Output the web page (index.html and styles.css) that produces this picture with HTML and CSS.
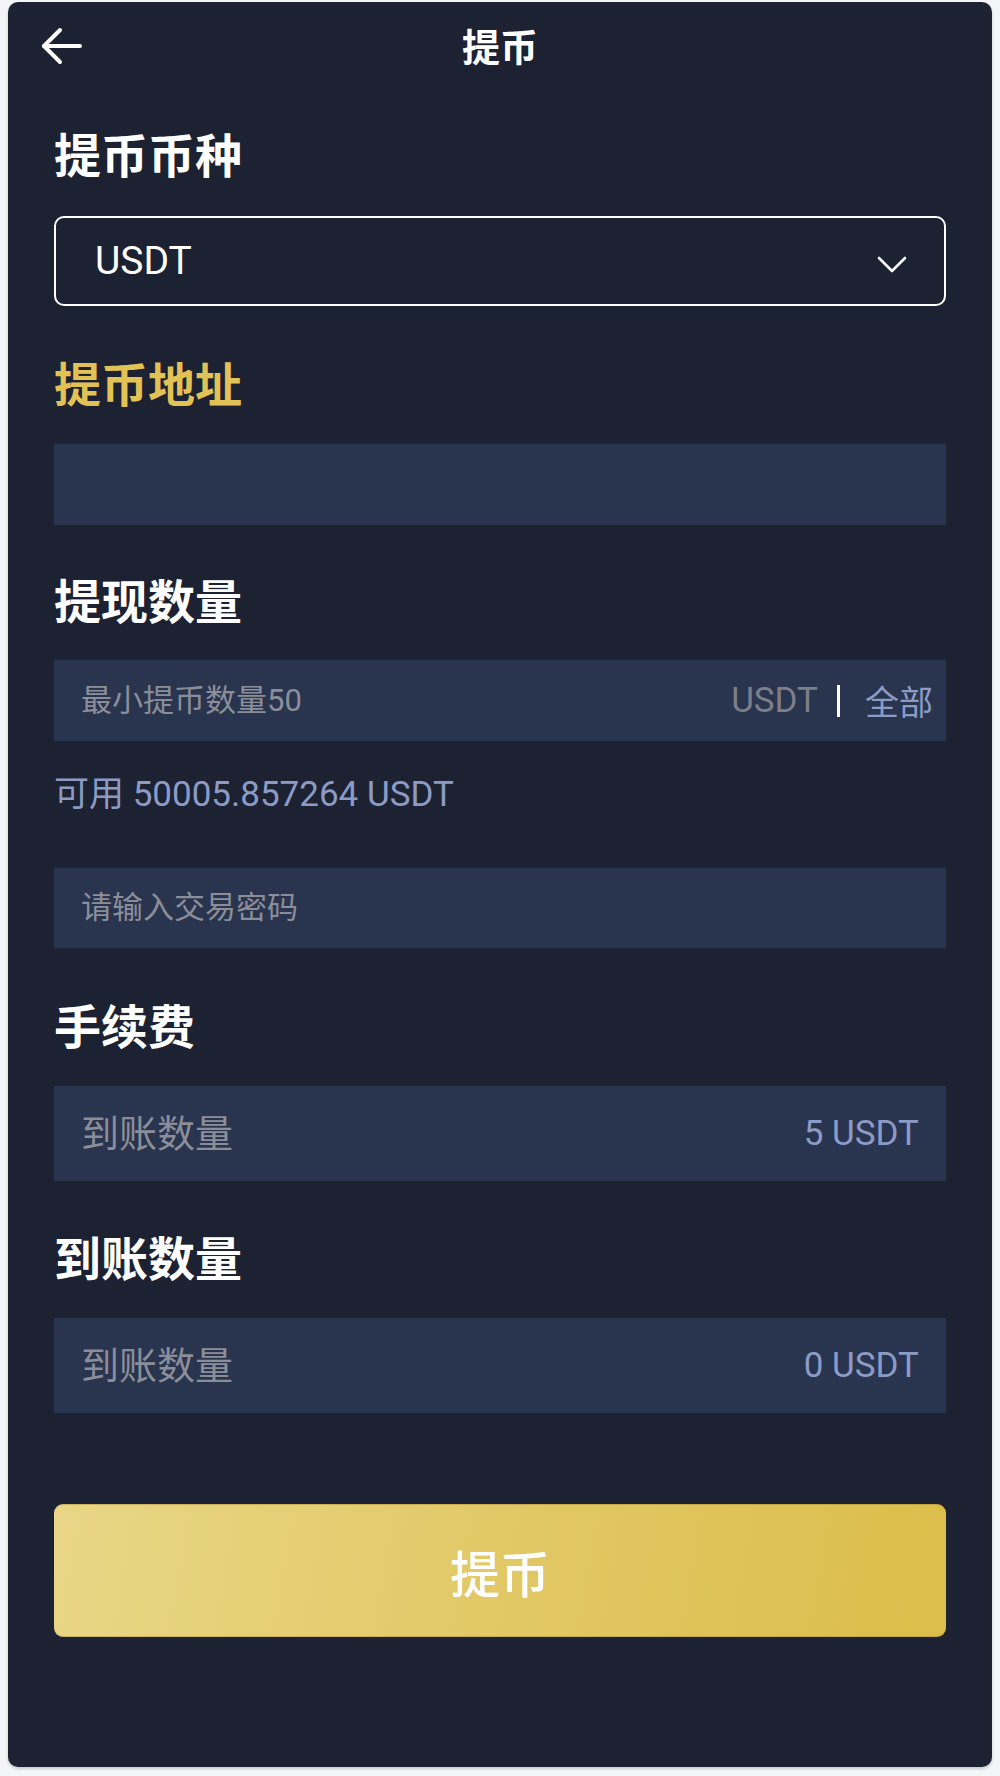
FILE: index.html
```html
<!DOCTYPE html>
<html lang="zh-CN">
<head>
<meta charset="utf-8">
<title>提币</title>
<link rel="stylesheet" href="styles.css">
</head>
<body>
<div class="screen">
  <header class="topbar">
    <a class="back" aria-label="返回">
      <svg width="46" height="40" viewBox="0 0 46 40" fill="none" stroke="#ffffff" stroke-width="4" stroke-linecap="round" stroke-linejoin="round">
        <path d="M20 4 L4 20 L20 36"/>
        <path d="M4 20 H40"/>
      </svg>
    </a>
    <h1 class="title">提币</h1>
    <span class="spacer"></span>
  </header>

  <main class="form">
    <h2 class="label label-first">提币币种</h2>
    <div class="select">
      <span class="select-value">USDT</span>
      <svg class="chev" width="32" height="20" viewBox="0 0 32 20" fill="none" stroke="#ffffff" stroke-width="2.6" stroke-linecap="round" stroke-linejoin="round">
        <path d="M3 3 L16 16 L29 3"/>
      </svg>
    </div>

    <h2 class="label label-gold">提币地址</h2>
    <div class="field field-addr"></div>

    <h2 class="label label-amount">提现数量</h2>
    <div class="field field-amount">
      <span class="ph">最小提币数量50</span>
      <span class="unit">USDT</span>
      <span class="sep"></span>
      <span class="all">全部</span>
    </div>

    <p class="avail">可用 50005.857264 USDT</p>

    <div class="field field-pwd">
      <span class="ph">请输入交易密码</span>
    </div>

    <h2 class="label label-fee">手续费</h2>
    <div class="field field-tall">
      <span class="ph-lg">到账数量</span>
      <span class="val">5 USDT</span>
    </div>

    <h2 class="label label-recv">到账数量</h2>
    <div class="field field-tall">
      <span class="ph-lg">到账数量</span>
      <span class="val">0 USDT</span>
    </div>

    <button class="submit" type="button">提币</button>
  </main>
</div>
</body>
</html>
```

FILE: styles.css
```css
* {
  box-sizing: border-box;
}

html, body {
  margin: 0;
  padding: 0;
}

body {
  background: #f4f5f7;
  font-family: Roboto, "Noto Sans CJK SC", sans-serif;
  color: #ffffff;
  padding: 2px 8px 9px 8px;
}

.screen {
  background: #1c2232;
  border-radius: 10px;
  height: 1765px;
  display: flex;
  flex-direction: column;
  box-shadow: 0 2px 3px rgba(0, 0, 0, 0.18);
}

.topbar {
  height: 86px;
  display: grid;
  grid-template-columns: 1fr auto 1fr;
  align-items: center;
  padding: 0 32px;
}

.back {
  display: flex;
  align-items: center;
  justify-self: start;
  margin-top: 2px;
}

.title {
  margin: 0;
  font-family: "Noto Sans CJK SC", sans-serif;
  font-size: 38px;
  font-weight: 700;
  line-height: 50px;
}

.form {
  display: flex;
  flex-direction: column;
  padding: 0 46px 130px 46px;
}

.label {
  margin: 0;
  font-family: "Noto Sans CJK SC", sans-serif;
  font-size: 47px;
  font-weight: 700;
  line-height: 60px;
  color: #ffffff;
}

.label-first { margin-top: 35px; }
.label-gold { margin-top: 46px; color: #e2c155; }
.label-amount { margin-top: 44px; }
.label-fee { margin-top: 46px; }
.label-recv { margin-top: 45px; }

.select {
  margin-top: 33px;
  height: 90px;
  border: 2px solid #ffffff;
  border-radius: 10px;
  display: flex;
  align-items: center;
  justify-content: space-between;
  padding: 0 36px 0 39px;
}

.select-value {
  font-size: 39px;
  line-height: 44px;
  color: #ffffff;
}

.chev {
  margin-top: 7px;
}

.field {
  background: #29344f;
  display: flex;
  align-items: center;
  padding: 0 27px;
}

.field-addr {
  margin-top: 32px;
  height: 81px;
}

.field-amount {
  margin-top: 31px;
  height: 81px;
  padding-right: 13px;
}

.field-pwd {
  margin-top: 53px;
  height: 80px;
}

.field-tall {
  margin-top: 32px;
  height: 95px;
  justify-content: space-between;
}

.ph {
  font-size: 31px;
  line-height: 40px;
  color: #8b8e98;
  flex: 1;
}

.unit {
  font-size: 35px;
  line-height: 40px;
  color: #7c7f88;
}

.sep {
  width: 3px;
  height: 32px;
  background: #ffffff;
  margin: 0 25px 0 19px;
}

.all {
  font-family: "Noto Sans CJK SC", sans-serif;
  font-size: 34px;
  line-height: 40px;
  color: #8c9bc6;
}

.avail {
  margin: 34px 0 0 0;
  font-size: 35px;
  line-height: 40px;
  color: #8c9bc6;
}

.ph-lg {
  font-size: 38px;
  line-height: 46px;
  color: #8b8e98;
}

.val {
  font-size: 35px;
  line-height: 46px;
  color: #8c9bc6;
}

.submit {
  margin-top: 91px;
  height: 133px;
  border: none;
  border-radius: 9px;
  background: linear-gradient(100deg, #e9d686 0%, #e2c866 50%, #dbbd4a 100%);
  box-shadow: inset 0 1px 0 rgba(150, 120, 30, 0.35), inset 0 -1px 0 rgba(150, 120, 30, 0.35);
  font-family: "Noto Sans CJK SC", sans-serif;
  font-size: 50px;
  font-weight: 500;
  color: #ffffff;
  padding: 0;
}
```
